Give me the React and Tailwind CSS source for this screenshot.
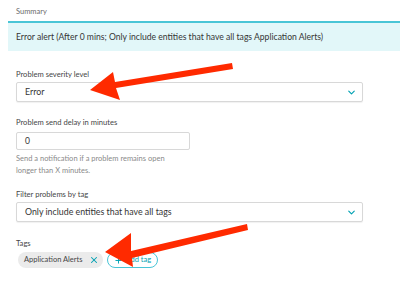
import React from 'react';
import { ChevronDown, X, Plus } from 'lucide-react';

function Label({ children, className = '' }) {
  return <div className={`text-[7.6px] leading-[10px] text-[#454646] ${className}`}>{children}</div>;
}

function SelectBox({ value }) {
  return (
    <div className="flex items-center justify-between h-[20px] w-[347px] border border-[#d8d8d8] rounded-[2px] bg-white pl-[8px] pr-[5px] shadow-[0_1px_1px_rgba(0,0,0,0.06)]">
      <span className="text-[8.8px] text-[#353535]">{value}</span>
      <ChevronDown size={11} strokeWidth={2.5} className="text-[#00a1b2]" />
    </div>
  );
}

export default function App() {
  return (
    <div className="relative w-[400px] h-[282px] bg-white overflow-hidden font-['Lato','Open_Sans',sans-serif]">
      <div className="pl-[16px] pt-[6px] h-[21px] text-[7.5px] text-[#6b6b6b]">Summary</div>
      <div className="ml-[8px] h-[30px] bg-[#e2f7f9] border-t-2 border-[#49c5d6] flex items-center pl-[8px] text-[8.6px] text-[#353535]">
        Error alert (After 0 mins; Only include entities that have all tags Application Alerts)
      </div>

      <div className="px-[16px]">
        <Label className="mt-[18px]">Problem severity level</Label>
        <div className="mt-[3px]">
          <SelectBox value="Error" />
        </div>

        <Label className="mt-[15px]">Problem send delay in minutes</Label>
        <div className="mt-[5px] h-[18px] w-[174px] border border-[#d8d8d8] rounded-[2px] flex items-center pl-[8px] text-[8.5px] text-[#353535]">
          0
        </div>
        <div className="mt-[3px] text-[7.5px] leading-[12px] text-[#8a8a8a]">
          Send a notification if a problem remains open
          <br />
          longer than X minutes.
        </div>

        <Label className="mt-[12px]">Filter problems by tag</Label>
        <div className="mt-[3px]">
          <SelectBox value="Only include entities that have all tags" />
        </div>

        <Label className="mt-[16px]">Tags</Label>
        <div className="mt-[4px] ml-[2px] flex items-center gap-[4px]">
          <div className="flex items-center h-[16px] rounded-full bg-[#ebebeb] pl-[6px] pr-[4px] gap-[6px] text-[7.5px] text-[#454646]">
            Application Alerts
            <X size={10} strokeWidth={2.5} className="text-[#00a1b2]" />
          </div>
          <div className="flex items-center h-[16px] rounded-full border border-[#49c5d6] px-[6px] gap-[3px] text-[7.5px] text-[#00a1b2]">
            <Plus size={9} strokeWidth={2.5} />
            Add tag
          </div>
        </div>
      </div>

      <svg className="absolute inset-0 pointer-events-none" width="400" height="282" viewBox="0 0 400 282">
        <g fill="#ff2a00">
          <polygon points="232,63 233,69 116,88 120,100 90,90 113,72 115,82" />
          <polygon points="247,224 248,230 132,258 133,267 105,252 131,233 131,251" />
        </g>
      </svg>
    </div>
  );
}
